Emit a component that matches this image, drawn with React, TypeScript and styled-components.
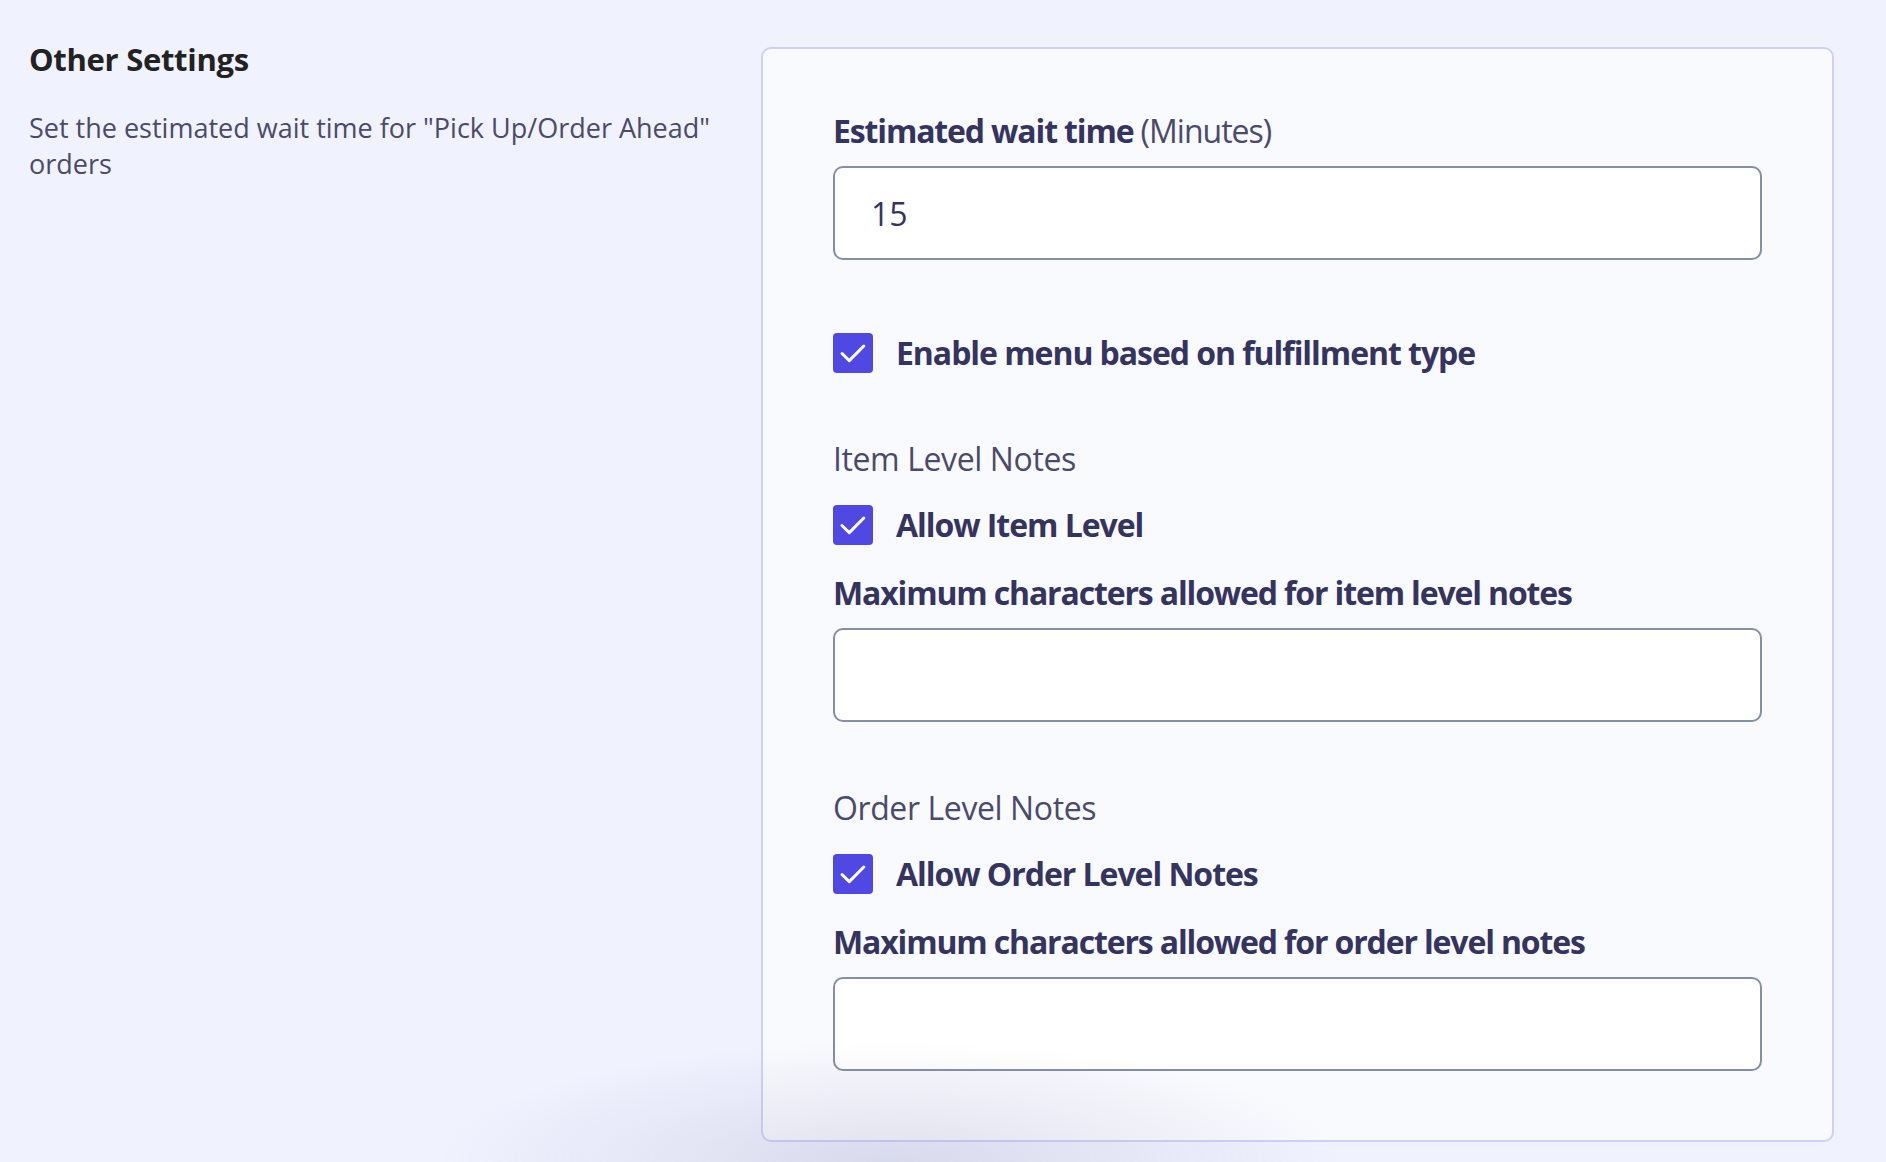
import React from "react";
import styled, { createGlobalStyle } from "styled-components";

const GlobalStyle = createGlobalStyle`
  html, body {
    margin: 0;
    padding: 0;
    background: #f0f2fe;
    overflow: hidden;
  }
  body {
    font-family: "Open Sans", "Lato", sans-serif;
    -webkit-font-smoothing: antialiased;
  }
  * { box-sizing: border-box; }
`;

const Page = styled.div`
  display: flex;
  align-items: flex-start;
  gap: 20px;
  padding: 41px 52px 20px 29px;
  min-height: 1162px;
`;

const Intro = styled.div`
  flex: 0 0 712px;
`;

const Title = styled.h2`
  margin: 0;
  font-size: 31px;
  line-height: 36px;
  font-weight: 700;
  letter-spacing: -0.3px;
  color: #222222;
`;

const Description = styled.p`
  margin: 33px 0 0;
  font-size: 27px;
  line-height: 36px;
  font-weight: 400;
  color: #4b4a6b;
`;

const Card = styled.section`
  flex: 1;
  margin-top: 6px;
  background: #f9fafe;
  border: 2px solid #cfd0f5;
  border-radius: 10px;
  padding: 62px 70px 69px;
  display: flex;
  flex-direction: column;
`;

const Field = styled.div<{ $top: number }>`
  display: flex;
  flex-direction: column;
  margin-top: ${(p) => p.$top}px;
`;

const FieldLabel = styled.label`
  display: block;
  font-size: 32px;
  line-height: 40px;
  font-weight: 700;
  letter-spacing: -1.15px;
  color: #35345e;
  margin-bottom: 15px;
`;

const Unit = styled.span`
  font-weight: 400;
  letter-spacing: -1px;
  color: #4b4a6b;
`;

const TextInput = styled.input`
  width: 100%;
  height: 94px;
  border: 2px solid #848fa3;
  border-radius: 10px;
  background: #ffffff;
  padding: 0 36px;
  font-family: "Open Sans", "Lato", sans-serif;
  font-size: 32px;
  font-weight: 400;
  color: #35345e;
  outline: none;
`;

const CheckRow = styled.label<{ $top: number }>`
  display: flex;
  align-items: center;
  gap: 23px;
  margin-top: ${(p) => p.$top}px;
  font-size: 32px;
  line-height: 40px;
  font-weight: 700;
  letter-spacing: -1.05px;
  color: #35345e;
  cursor: pointer;
`;

const Box = styled.span`
  width: 40px;
  height: 40px;
  flex-shrink: 0;
  border-radius: 4px;
  background: #4f48e2;
  display: flex;
  align-items: center;
  justify-content: center;
`;

const SubHeading = styled.div`
  margin-top: 66px;
  font-size: 32px;
  line-height: 40px;
  font-weight: 400;
  letter-spacing: -0.4px;
  color: #4b4a6b;
`;

const BottomShade = styled.div`
  position: fixed;
  left: 440px;
  bottom: 0;
  width: 900px;
  height: 120px;
  pointer-events: none;
  background: radial-gradient(
    ellipse 50% 100% at 50% 100%,
    rgba(140, 142, 180, 0.24) 0%,
    rgba(140, 142, 180, 0.1) 55%,
    rgba(140, 142, 180, 0) 100%
  );
`;

const Check = () => (
  <svg width="40" height="40" viewBox="0 0 40 40" aria-hidden="true">
    <polyline
      points="9,20.5 16.3,27.6 30.8,13"
      fill="none"
      stroke="#ffffff"
      strokeWidth="3"
      strokeLinecap="round"
      strokeLinejoin="round"
    />
  </svg>
);

const Checkbox: React.FC<{ label: string; top: number }> = ({ label, top }) => (
  <CheckRow $top={top}>
    <Box>
      <Check />
    </Box>
    {label}
  </CheckRow>
);

export default function App() {
  return (
    <>
      <GlobalStyle />
      <Page>
        <Intro>
          <Title>Other Settings</Title>
          <Description>
            Set the estimated wait time for "Pick Up/Order Ahead" orders
          </Description>
        </Intro>
        <Card>
          <Field $top={0}>
            <FieldLabel>
              Estimated wait time <Unit>(Minutes)</Unit>
            </FieldLabel>
            <TextInput defaultValue="15" />
          </Field>

          <Checkbox top={73} label="Enable menu based on fulfillment type" />

          <SubHeading>Item Level Notes</SubHeading>
          <Checkbox top={26} label="Allow Item Level" />
          <Field $top={28}>
            <FieldLabel>Maximum characters allowed for item level notes</FieldLabel>
            <TextInput defaultValue="" />
          </Field>

          <SubHeading>Order Level Notes</SubHeading>
          <Checkbox top={26} label="Allow Order Level Notes" />
          <Field $top={28}>
            <FieldLabel>Maximum characters allowed for order level notes</FieldLabel>
            <TextInput defaultValue="" />
          </Field>
        </Card>
      </Page>
      <BottomShade />
    </>
  );
}
